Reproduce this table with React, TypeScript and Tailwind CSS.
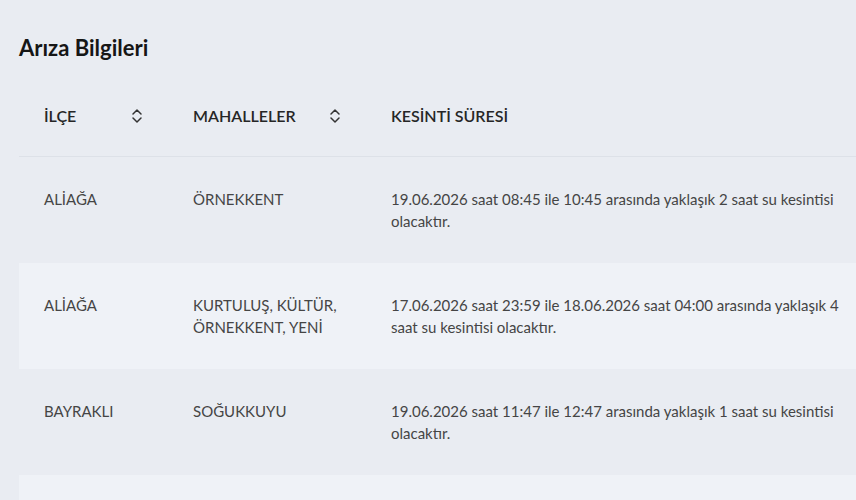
import React from "react";

const rows = [
  {
    ilce: "ALİAĞA",
    mahalle: "ÖRNEKKENT",
    sure: "19.06.2026 saat 08:45 ile 10:45 arasında yaklaşık 2 saat su kesintisi olacaktır.",
  },
  {
    ilce: "ALİAĞA",
    mahalle: "KURTULUŞ, KÜLTÜR, ÖRNEKKENT, YENİ",
    sure: "17.06.2026 saat 23:59 ile 18.06.2026 saat 04:00 arasında yaklaşık 4 saat su kesintisi olacaktır.",
  },
  {
    ilce: "BAYRAKLI",
    mahalle: "SOĞUKKUYU",
    sure: "19.06.2026 saat 11:47 ile 12:47 arasında yaklaşık 1 saat su kesintisi olacaktır.",
  },
  { ilce: "", mahalle: "", sure: "" },
];

function SortIcon() {
  return (
    <svg width="12" height="16" viewBox="0 0 12 16" fill="none" stroke="#333" strokeWidth="1.5" strokeLinecap="round" strokeLinejoin="round">
      <path d="M2 6l4-4 4 4" />
      <path d="M2 10l4 4 4-4" />
    </svg>
  );
}

export default function App() {
  return (
    <div className="w-[856px] h-[500px] overflow-hidden bg-[#e9ecf2]" style={{ fontFamily: "Lato, 'Open Sans', sans-serif" }}>
      <h1 className="pl-[19px] pt-[33px] text-[22px] font-bold text-[#161616] leading-[30px]">Arıza Bilgileri</h1>
      <div className="ml-[19px] w-[900px] mt-[12px]">
        <div className="flex items-center h-[82px] border-b border-[#dde1e8] text-[16px] font-semibold text-[#262626]">
          <div className="w-[149px] pl-[25px] pr-[25px] flex items-center justify-between">
            <span>İLÇE</span>
            <SortIcon />
          </div>
          <div className="w-[198px] pl-[25px] pr-[25px] flex items-center justify-between">
            <span>MAHALLELER</span>
            <SortIcon />
          </div>
          <div className="flex-1 pl-[25px]">KESİNTİ SÜRESİ</div>
        </div>
        {rows.map((r, i) => (
          <div key={i} className={`flex h-[106px] py-[31px] text-[15px] leading-[22px] text-[#454545] ${i % 2 === 1 ? "bg-[#eff2f7]" : ""}`}>
            <div className="w-[149px] px-[25px]">{r.ilce}</div>
            <div className="w-[198px] px-[25px]">{r.mahalle}</div>
            <div className="w-[490px] pl-[25px]">{r.sure}</div>
          </div>
        ))}
      </div>
    </div>
  );
}
